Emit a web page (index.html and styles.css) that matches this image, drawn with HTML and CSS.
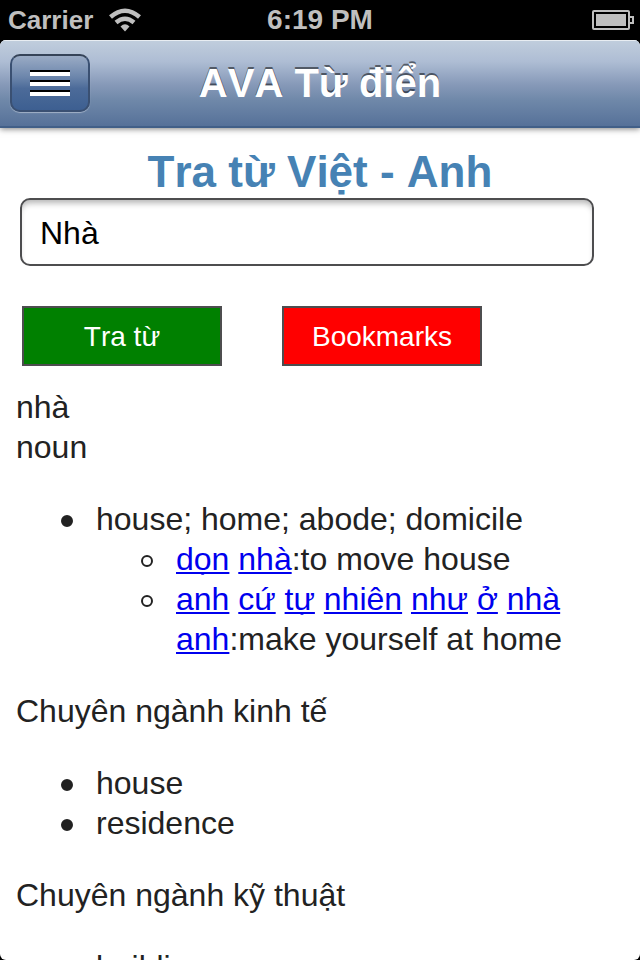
FILE: index.html
```html
<!DOCTYPE html>
<html lang="vi">
<head>
<meta charset="utf-8">
<meta name="viewport" content="width=device-width, initial-scale=1">
<title>AVA Từ điển</title>
<link rel="stylesheet" href="styles.css">
</head>
<body>
<div class="status">
  <div class="status-left">
    <span class="carrier">Carrier</span>
    <svg class="wifi" width="32" height="24" viewBox="0 0 32 24" aria-hidden="true">
      <g fill="none" stroke="#bfbfbf" stroke-width="4.500">
        <path d="M1.500 9Q16 -3.500 30.500 9"/>
        <path d="M7 14.500Q16 7 25 14.500"/>
      </g>
      <path d="M11.500 18.500Q16 14 20.500 18.500L16 23.500Z" fill="#bfbfbf"/>
    </svg>
  </div>
  <time class="clock">6:19 PM</time>
  <svg class="battery" width="42" height="20" viewBox="0 0 42 20" aria-hidden="true">
    <rect x="1" y="1" width="36" height="18" rx="1" fill="none" stroke="#bfbfbf" stroke-width="2"/>
    <rect x="4" y="4" width="30" height="12" fill="#bfbfbf"/>
    <path d="M38 7h3v6h-3" fill="none" stroke="#bfbfbf" stroke-width="2"/>
  </svg>
</div>
<div class="app">
  <header class="navbar">
    <button class="menu" type="button" aria-label="Menu">
      <svg width="40" height="26" viewBox="0 0 40 26" aria-hidden="true">
        <path d="M0 0h40v2H0zM0 10h40v2H0zM0 20h40v2H0z" fill="#000"/>
        <path d="M0 2h40v4H0zM0 12h40v4H0zM0 22h40v4H0z" fill="#fff"/>
      </svg>
    </button>
    <h1 class="title">AVA Từ điển</h1>
  </header>
  <main class="content">
    <form class="search">
      <h2 class="heading"><label for="word">Tra từ Việt - Anh</label></h2>
      <input class="word" id="word" type="text" value="Nhà">
      <div class="actions">
        <button class="action lookup" type="button">Tra từ</button>
        <button class="action bookmarks" type="button">Bookmarks</button>
      </div>
    </form>
    <article class="entry">
      <p class="line">nhà</p>
      <p class="line">noun</p>
      <ul class="senses">
        <li>house; home; abode; domicile
          <ul class="examples">
            <li><a href="#don">dọn</a> <a href="#nha">nhà</a>:to move house</li>
            <li><a href="#anh">anh</a> <a href="#cu">cứ</a> <a href="#tu">tự</a> <a href="#nhien">nhiên</a> <a href="#nhu">như</a> <a href="#o">ở</a> <a href="#nha">nhà</a> <a href="#anh">anh</a>:make yourself at home</li>
          </ul>
        </li>
      </ul>
      <p class="line">Chuyên ngành kinh tế</p>
      <ul class="senses">
        <li>house</li>
        <li>residence</li>
      </ul>
      <p class="line">Chuyên ngành kỹ thuật</p>
      <ul class="senses">
        <li>building</li>
      </ul>
    </article>
  </main>
</div>
</body>
</html>
```
FILE: styles.css
```css
*,
*::before {
  box-sizing: border-box;
}

body {
  display: flex;
  flex-direction: column;
  height: 100vh;
  margin: 0;
  overflow: hidden;
  background: #000;
  color: #222;
  font-family: "Liberation Sans", Arial, sans-serif;
  font-kerning: none;
}

.status {
  display: grid;
  grid-template-columns: 1fr auto 1fr;
  align-items: center;
  flex: none;
  height: 40px;
  padding: 0 6px;
  color: #bfbfbf;
  font-weight: bold;
}

.status-left {
  display: flex;
  align-items: center;
  gap: 16px;
  padding-left: 2px;
}

.carrier {
  font-size: 26px;
}

.clock {
  font-size: 28px;
}

.battery {
  justify-self: end;
}

.app {
  display: flex;
  flex-direction: column;
  flex: 1;
  min-height: 0;
  border-radius: 6px;
  background: #fff;
  overflow: hidden;
}

.navbar {
  display: grid;
  grid-template-columns: 80px 1fr 80px;
  align-items: center;
  flex: none;
  height: 88px;
  padding: 0 10px;
  border-bottom: 2px solid #415f88;
  background: linear-gradient(#c1cedd, #aebdd4 25%, #8699b8 52%, #6f88a9 70%, #567199);
  box-shadow: inset 0 1px 0 #e8edf2, 0 1px 6px rgba(0, 0, 0, 0.5);
}

.menu {
  display: flex;
  align-items: center;
  justify-content: center;
  height: 58px;
  padding: 0;
  border: 2px solid #3a5072;
  border-top-color: #354358;
  border-radius: 10px;
  background: linear-gradient(#9aabc5, #6b85ab 40%, #4c6b99 60%, #3d5f91);
  box-shadow: 0 1px 1px rgba(255, 255, 255, 0.4);
}

.title {
  margin: 0;
  color: #fff;
  font-size: 40px;
  line-height: 48px;
  text-align: center;
  text-shadow: 0 -2px 0 rgba(0, 0, 0, 0.5);
}

.content {
  flex: 1;
  min-height: 0;
  padding: 18px 16px 0;
  overflow: hidden;
}

.search {
  display: flex;
  flex-direction: column;
}

.heading {
  margin: 0;
  color: #4682b4;
  font-size: 44px;
  line-height: 52px;
  text-align: center;
}

.word {
  height: 68px;
  margin: 0 30px 0 4px;
  padding: 2px 18px 0;
  border: 2px solid #4d4d4f;
  border-radius: 10px;
  background: #fff;
  box-shadow: inset 0 6px 6px -3px rgba(0, 0, 0, 0.3);
  color: #000;
  font: 32px "Liberation Sans", Arial, sans-serif;
}

.actions {
  display: flex;
  gap: 60px;
  margin: 40px 0 0 6px;
}

.action {
  width: 200px;
  height: 60px;
  padding: 2px 0 0;
  border: 2px solid #4d4d4f;
  color: #fff;
  font: 28px "Liberation Sans", Arial, sans-serif;
  font-kerning: none;
}

.lookup {
  background: #008000;
}

.bookmarks {
  background: #f00;
}

.entry {
  margin-top: 21px;
  font-size: 32px;
  line-height: 40px;
}

.line {
  margin: 0;
}

.senses,
.examples {
  margin: 0;
  padding-left: 80px;
  list-style: none;
}

.senses {
  margin: 32px 0;
}

.senses li::before {
  content: "";
  display: inline-block;
  width: 12px;
  height: 12px;
  margin: 0 23px 0 -35px;
  border: 2px solid #222;
  border-radius: 50%;
  background: #222;
  vertical-align: 3px;
}

.examples li::before {
  background: none;
}

.entry a {
  color: #00e;
  text-decoration-thickness: 2px;
  text-underline-offset: 2px;
  text-decoration-skip-ink: none;
}
```
